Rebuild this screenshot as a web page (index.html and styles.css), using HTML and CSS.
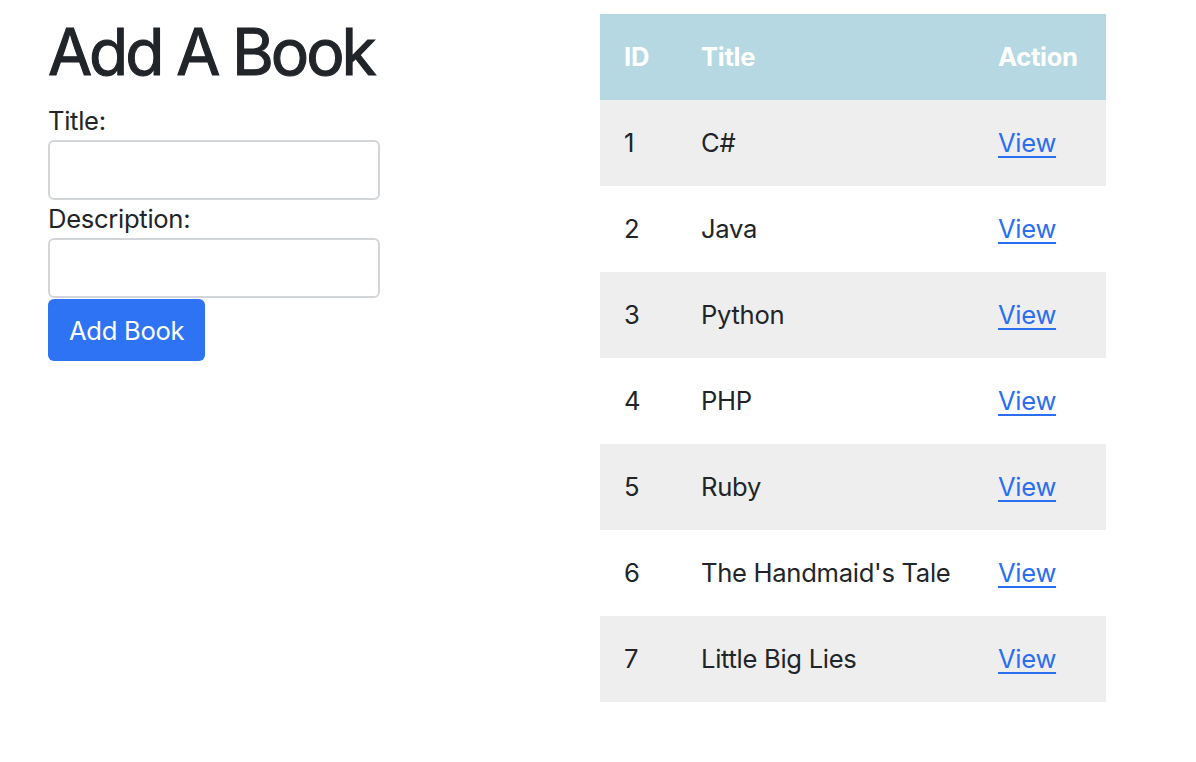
FILE: index.html
```html
<!DOCTYPE html>
<html lang="en">
<head>
<meta charset="utf-8">
<title>Books</title>
<link rel="stylesheet" href="styles.css">
</head>
<body>
<div class="page">
  <section class="form-col">
    <h1 class="heading">Add A Book</h1>
    <form class="book-form">
      <label class="field-label" for="title">Title:</label>
      <input class="field-input" id="title" type="text">
      <label class="field-label" for="desc">Description:</label>
      <input class="field-input" id="desc" type="text">
      <button class="btn-primary" type="button">Add Book</button>
    </form>
  </section>
  <section class="table-col">
    <table class="books">
      <colgroup>
        <col class="c-id"><col class="c-title"><col class="c-action">
      </colgroup>
      <thead>
        <tr><th>ID</th><th>Title</th><th>Action</th></tr>
      </thead>
      <tbody>
        <tr><td>1</td><td>C#</td><td><a href="#">View</a></td></tr>
        <tr><td>2</td><td>Java</td><td><a href="#">View</a></td></tr>
        <tr><td>3</td><td>Python</td><td><a href="#">View</a></td></tr>
        <tr><td>4</td><td>PHP</td><td><a href="#">View</a></td></tr>
        <tr><td>5</td><td>Ruby</td><td><a href="#">View</a></td></tr>
        <tr><td>6</td><td>The Handmaid's Tale</td><td><a href="#">View</a></td></tr>
        <tr><td>7</td><td>Little Big Lies</td><td><a href="#">View</a></td></tr>
      </tbody>
    </table>
  </section>
</div>
</body>
</html>
```

FILE: styles.css
```css
* { box-sizing: border-box; }
html, body { margin: 0; padding: 0; background: #fff; }
body {
  font-family: Inter, "Noto Sans", "Liberation Sans", sans-serif;
  font-size: 25.6px;
  color: #212529;
  letter-spacing: -0.3px;
}
.page {
  display: flex;
  align-items: flex-start;
  padding-top: 14px;
}
.form-col {
  width: 600px;
  padding-left: 48px;
}
.heading {
  margin: 0;
  font-size: 64px;
  font-weight: 400;
  line-height: 76px;
  letter-spacing: -3.1px;
  -webkit-text-stroke: 1.1px #212529;
}
.book-form {
  display: flex;
  flex-direction: column;
  align-items: flex-start;
  padding-top: 12px;
}
.field-label {
  line-height: 38px;
}
.field-input {
  width: 332px;
  height: 60px;
  border: 2px solid #d3d6d9;
  border-radius: 6px;
  font: inherit;
  padding: 0 14px;
  margin: 0;
}
.btn-primary {
  margin-top: 1px;
  height: 62px;
  padding: 0 21px;
  background: #2e73f4;
  color: #fff;
  border: none;
  border-radius: 6px;
  font: inherit;
  letter-spacing: -0.3px;
  cursor: pointer;
}
.table-col { width: 506px; }
.books {
  width: 506px;
  border-collapse: collapse;
  table-layout: fixed;
}
.c-id { width: 77px; }
.c-title { width: 297px; }
.c-action { width: 132px; }
.books th, .books td {
  height: 86px;
  padding: 0 24px;
  text-align: left;
  line-height: 38px;
  white-space: nowrap;
}
.books th {
  background: #b6d8e2;
  color: #fff;
  font-weight: 700;
}
.books tbody tr:nth-child(odd) { background: #eeeeee; }
.books a {
  color: #2a6ff0;
  text-decoration: underline;
  text-underline-offset: 4px;
}
```
